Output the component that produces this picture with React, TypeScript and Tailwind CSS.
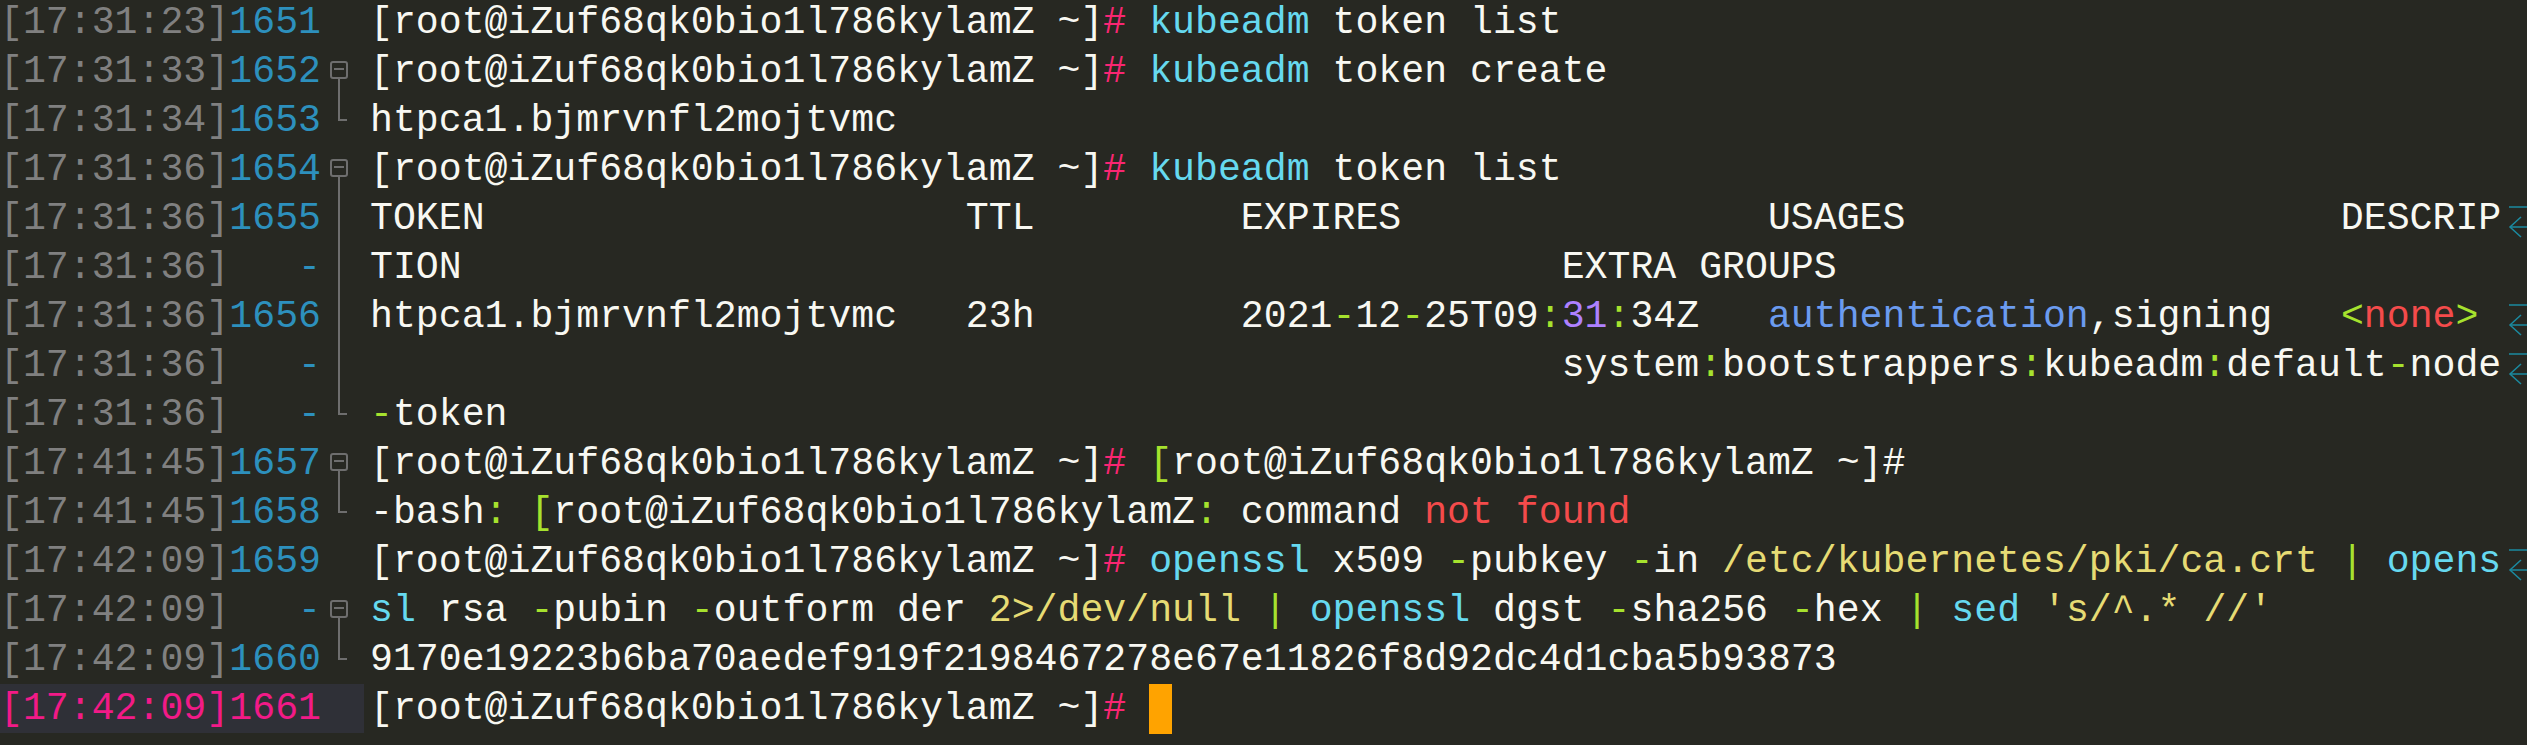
import React from 'react';

type Seg = [string, string];
type Fold = 'none' | 'box' | 'line' | 'end';

interface Row {
  time: string;
  num: string;
  fold: Fold;
  segs: Seg[];
  wrap?: boolean;
  current?: boolean;
  cursor?: boolean;
}

const W = 'text-[#f8f8f2]';
const P = 'text-[#f92672]';
const C = 'text-[#66d9ef]';
const G = 'text-[#a6e22e]';
const Y = 'text-[#e6db74]';
const V = 'text-[#ae81ff]';
const R = 'text-[#f44b4b]';
const B = 'text-[#6b9bef]';

const prompt: Seg[] = [
  ['[root@iZuf68qk0bio1l786kylamZ ~]', W],
  ['#', P],
  [' ', W],
];

const rows: Row[] = [
  { time: '17:31:23', num: '1651', fold: 'none', segs: [...prompt, ['kubeadm', C], [' token list', W]] },
  { time: '17:31:33', num: '1652', fold: 'box', segs: [...prompt, ['kubeadm', C], [' token create', W]] },
  { time: '17:31:34', num: '1653', fold: 'end', segs: [['htpca1.bjmrvnfl2mojtvmc', W]] },
  { time: '17:31:36', num: '1654', fold: 'box', segs: [...prompt, ['kubeadm', C], [' token list', W]] },
  {
    time: '17:31:36',
    num: '1655',
    fold: 'line',
    wrap: true,
    segs: [['TOKEN'.padEnd(26) + 'TTL'.padEnd(12) + 'EXPIRES'.padEnd(23) + 'USAGES'.padEnd(25) + 'DESCRIP', W]],
  },
  { time: '17:31:36', num: '-', fold: 'line', segs: [['TION'.padEnd(52) + 'EXTRA GROUPS', W]] },
  {
    time: '17:31:36',
    num: '1656',
    fold: 'line',
    wrap: true,
    segs: [
      ['htpca1.bjmrvnfl2mojtvmc'.padEnd(26) + '23h'.padEnd(12) + '2021', W],
      ['-', G],
      ['12', W],
      ['-', G],
      ['25T09', W],
      [':', G],
      ['31', V],
      [':', G],
      ['34Z   ', W],
      ['authentication', B],
      [',signing   ', W],
      ['<', G],
      ['none', R],
      ['>', G],
      ['  ', W],
    ],
  },
  {
    time: '17:31:36',
    num: '-',
    fold: 'line',
    wrap: true,
    segs: [
      [' '.repeat(52) + 'system', W],
      [':', G],
      ['bootstrappers', W],
      [':', G],
      ['kubeadm', W],
      [':', G],
      ['default', W],
      ['-', G],
      ['node', W],
    ],
  },
  { time: '17:31:36', num: '-', fold: 'end', segs: [['-', G], ['token', W]] },
  {
    time: '17:41:45',
    num: '1657',
    fold: 'box',
    segs: [...prompt, ['[', G], ['root@iZuf68qk0bio1l786kylamZ ~]#', W]],
  },
  {
    time: '17:41:45',
    num: '1658',
    fold: 'end',
    segs: [
      ['-bash', W],
      [':', G],
      [' ', W],
      ['[', G],
      ['root@iZuf68qk0bio1l786kylamZ', W],
      [':', G],
      [' command ', W],
      ['not found', R],
    ],
  },
  {
    time: '17:42:09',
    num: '1659',
    fold: 'none',
    wrap: true,
    segs: [
      ...prompt,
      ['openssl', C],
      [' x509 ', W],
      ['-', G],
      ['pubkey ', W],
      ['-', G],
      ['in ', W],
      ['/etc/kubernetes/pki/ca.crt', Y],
      [' ', W],
      ['|', G],
      [' ', W],
      ['opens', C],
    ],
  },
  {
    time: '17:42:09',
    num: '-',
    fold: 'box',
    segs: [
      ['sl', C],
      [' rsa ', W],
      ['-', G],
      ['pubin ', W],
      ['-', G],
      ['outform der ', W],
      ['2>/dev/null', Y],
      [' ', W],
      ['|', G],
      [' ', W],
      ['openssl', C],
      [' dgst ', W],
      ['-', G],
      ['sha256 ', W],
      ['-', G],
      ['hex ', W],
      ['|', G],
      [' ', W],
      ['sed', C],
      [' ', W],
      ["'s/^.* //'", Y],
    ],
  },
  {
    time: '17:42:09',
    num: '1660',
    fold: 'end',
    segs: [['9170e19223b6ba70aedef919f2198467278e67e11826f8d92dc4d1cba5b93873', W]],
  },
  { time: '17:42:09', num: '1661', fold: 'none', current: true, cursor: true, segs: [...prompt] },
];

const FoldMark = ({ fold }: { fold: Fold }) => (
  <svg width="43" height="49" viewBox="0 0 43 49" className="shrink-0">
    {fold === 'box' && (
      <g stroke="#6e6e6e" strokeWidth="2" fill="none">
        <rect x="10" y="15" width="16" height="16" rx="2" />
        <line x1="13" y1="22" x2="23" y2="22" />
        <line x1="18" y1="31" x2="18" y2="49" />
      </g>
    )}
    {fold === 'line' && <line x1="18" y1="0" x2="18" y2="49" stroke="#6e6e6e" strokeWidth="2" />}
    {fold === 'end' && (
      <polyline points="18,0 18,24 26,24" stroke="#6e6e6e" strokeWidth="2" fill="none" />
    )}
  </svg>
);

const WrapMark = () => (
  <svg width="20" height="49" viewBox="0 0 20 49" className="shrink-0 ml-[6px]">
    <g stroke="#1b8aa0" strokeWidth="1.5" fill="none">
      <line x1="2" y1="13" x2="20" y2="13" />
      <polyline points="14,23 3,33 14,43" />
      <line x1="3" y1="33" x2="20" y2="33" />
    </g>
  </svg>
);

const TermLine = ({ row }: { row: Row }) => (
  <div className="flex h-[49px] items-center leading-[49px]">
    <div className={`flex h-full w-[364px] shrink-0 ${row.current ? 'bg-[#2f3037]' : ''}`}>
      <span className={`w-[229px] shrink-0 ${row.current ? 'text-[#f21a87]' : 'text-[#808080]'}`}>
        [{row.time}]
      </span>
      <span className={`w-[92px] shrink-0 text-right ${row.current ? 'text-[#f21a87]' : 'text-[#2d90bd]'}`}>
        {row.num}
      </span>
      <FoldMark fold={row.fold} />
    </div>
    <div className="w-[6px] shrink-0" />
    <div className="flex h-full w-[2131px] shrink-0 items-center whitespace-pre">
      {row.segs.map(([t, c], i) => (
        <span key={i} className={c}>
          {t}
        </span>
      ))}
      {row.cursor && <span className="inline-block h-[50px] w-[23px] bg-[#ffa300]" />}
    </div>
    {row.wrap && <WrapMark />}
  </div>
);

export default function App() {
  return (
    <div className="h-[745px] w-full overflow-hidden bg-[#272822] font-['Liberation_Mono',monospace] text-[38.2px] text-[#f8f8f2]">
      <div className="-mt-[2px] flex flex-col">
        {rows.map((r, i) => (
          <TermLine key={i} row={r} />
        ))}
      </div>
    </div>
  );
}
